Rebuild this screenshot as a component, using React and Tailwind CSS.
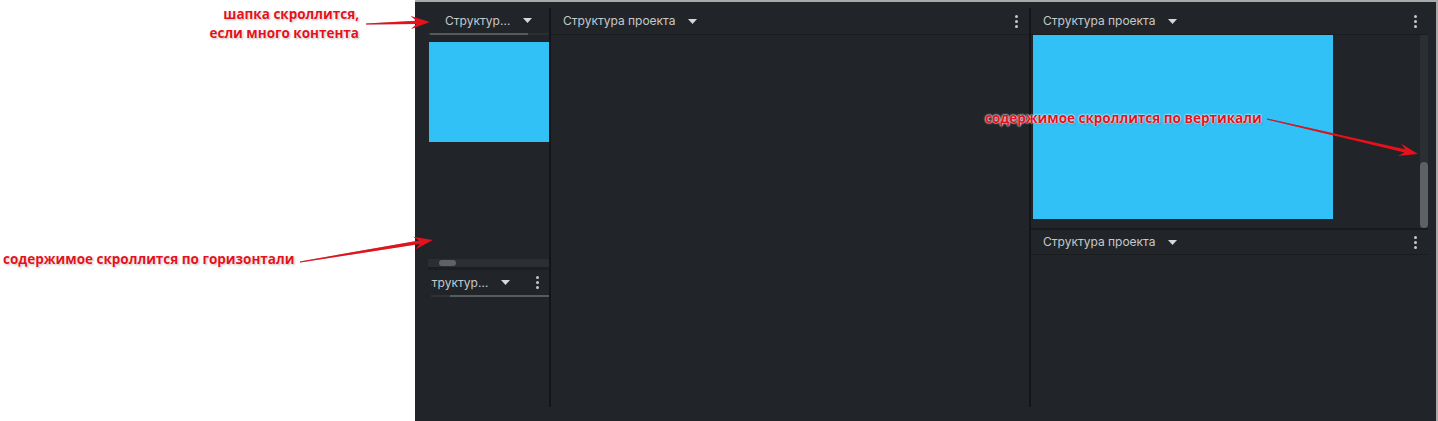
import React from "react";

const UI_FONT = { fontFamily: "Inter, 'Noto Sans', sans-serif" };
const NOTE_FONT = { fontFamily: "'Open Sans', 'Noto Sans', sans-serif" };

function Caret() {
  return (
    <svg width="9" height="5" viewBox="0 0 9 5" className="block shrink-0">
      <path d="M0 0H9L4.5 5Z" fill="#d6d8da" />
    </svg>
  );
}

function Kebab() {
  return (
    <div className="flex shrink-0 flex-col gap-[2px]">
      <span className="block size-[3px] rounded-full bg-[#c6c8ca]" />
      <span className="block size-[3px] rounded-full bg-[#c6c8ca]" />
      <span className="block size-[3px] rounded-full bg-[#c6c8ca]" />
    </div>
  );
}

function Header({ className = "" }) {
  return (
    <div className={`flex shrink-0 items-center border-b border-[#1a1d20] pl-[12px] pr-[11px] ${className}`}>
      <span className="text-[12px] leading-none text-[#c6c8ca]">Структура проекта</span>
      <span className="ml-[13px]">
        <Caret />
      </span>
      <div className="flex-1" />
      <Kebab />
    </div>
  );
}

function arrowPoints(x1, y1, x2, y2, headLen = 19, headW = 6.5, w0 = 0.6, w1 = 1.7) {
  const dx = x2 - x1;
  const dy = y2 - y1;
  const len = Math.hypot(dx, dy);
  const ux = dx / len;
  const uy = dy / len;
  const nx = -uy;
  const ny = ux;
  const bx = x2 - ux * headLen;
  const by = y2 - uy * headLen;
  const mx = x2 - ux * headLen * 0.72;
  const my = y2 - uy * headLen * 0.72;
  const pts = [
    [x1 + nx * w0, y1 + ny * w0],
    [mx + nx * w1, my + ny * w1],
    [bx + nx * headW, by + ny * headW],
    [x2, y2],
    [bx - nx * headW, by - ny * headW],
    [mx - nx * w1, my - ny * w1],
    [x1 - nx * w0, y1 - ny * w0],
  ];
  return pts.map((p) => p.map((v) => v.toFixed(1)).join(",")).join(" ");
}

const noteCls =
  "absolute whitespace-nowrap text-[13.5px] font-bold leading-[19px] text-[#e3121c] [text-shadow:0_0_2px_#fff,0_0_2px_#fff,1px_1px_2px_rgba(0,0,0,0.35)]";

function ScrollHeaderContent() {
  return (
    <>
      <span className="w-[66px] shrink-0 truncate text-[12px] leading-[14px] text-[#c6c8ca]">
        Структура проекта
      </span>
      <span className="ml-[12px]">
        <Caret />
      </span>
      <span className="ml-[26px]">
        <Kebab />
      </span>
    </>
  );
}

export default function App() {
  return (
    <div className="relative flex h-[421px] w-[1438px] overflow-hidden bg-white" style={UI_FONT}>
      <div className="w-[415px] shrink-0" />

      <div className="flex h-full flex-1 border-t-2 border-r-2 border-[#a9a9a9] bg-[#212529] pb-[14px] pl-[13px] pr-[8px] pt-[6px]">
        {/* left column */}
        <div className="flex w-[123px] shrink-0 flex-col border-r-2 border-[#131619]">
          <div className="h-[25px] shrink-0 overflow-hidden">
            <div className="flex h-full w-[145px] items-center pl-[17px]">
              <ScrollHeaderContent />
            </div>
          </div>
          <div className="flex h-[2px] shrink-0 bg-[#2a2e32]">
            <div className="ml-[2px] w-[98px] bg-[#575b5f]" />
          </div>
          <div className="flex h-[232px] shrink-0 flex-col">
            <div className="mt-[7px] h-[100px] overflow-hidden pl-[1px]">
              <div className="h-full w-[180px] bg-[#31c1f7]" />
            </div>
            <div className="mt-auto flex h-[8px] items-center bg-[#2b2f33]">
              <div className="ml-[11px] h-[6px] w-[17px] rounded-full bg-[#5e6266]" />
            </div>
          </div>
          <div className="h-[3px] shrink-0 bg-[#1c1f22]" />
          <div className="ml-[3px] h-[25px] shrink-0 overflow-hidden">
            <div className="-ml-[25px] flex h-full w-[145px] items-center pl-[17px]">
              <ScrollHeaderContent />
            </div>
          </div>
          <div className="ml-[3px] flex h-[2px] shrink-0 bg-[#2e3236]">
            <div className="ml-[19px] flex-1 bg-[#575b5f]" />
          </div>
          <div className="flex-1" />
        </div>

        {/* middle column */}
        <div className="flex w-[480px] shrink-0 flex-col border-r-2 border-[#131619]">
          <Header className="h-[27px]" />
          <div className="flex-1" />
        </div>

        {/* right column */}
        <div className="flex min-w-0 flex-1 flex-col">
          <Header className="h-[27px]" />
          <div className="flex h-[193px] shrink-0">
            <div className="pl-[2px]">
              <div className="h-[184px] w-[300px] bg-[#31c1f7]" />
            </div>
            <div className="flex-1" />
            <div className="flex w-[8px] flex-col justify-end bg-[#2b2f33]">
              <div className="h-[66px] rounded-full bg-[#5e6266]" />
            </div>
          </div>
          <div className="h-[2px] shrink-0 bg-[#181b1e]" />
          <Header className="h-[25px]" />
          <div className="flex-1" />
        </div>
      </div>

      {/* annotations */}
      <svg
        className="pointer-events-none absolute left-0 top-0"
        width="1438"
        height="421"
        viewBox="0 0 1438 421"
      >
        <g fill="#e3121c" style={{ filter: "drop-shadow(0.5px 0.5px 0.6px rgba(0,0,0,0.35))" }}>
          <polygon points={arrowPoints(366, 24, 430, 22)} />
          <polygon points={arrowPoints(300, 262, 433, 240)} />
          <polygon points={arrowPoints(1267, 119, 1418, 154)} />
        </g>
      </svg>

      <div className={`${noteCls} right-[1079px] top-[5px] text-right`} style={NOTE_FONT}>
        шапка скроллится,
        <br />
        если много контента
      </div>
      <div className={`${noteCls} left-[3px] top-[250px]`} style={NOTE_FONT}>
        содержимое скроллится по горизонтали
      </div>
      <div className={`${noteCls} left-[985px] top-[109px]`} style={NOTE_FONT}>
        содержимое скроллится по вертикали
      </div>
    </div>
  );
}
